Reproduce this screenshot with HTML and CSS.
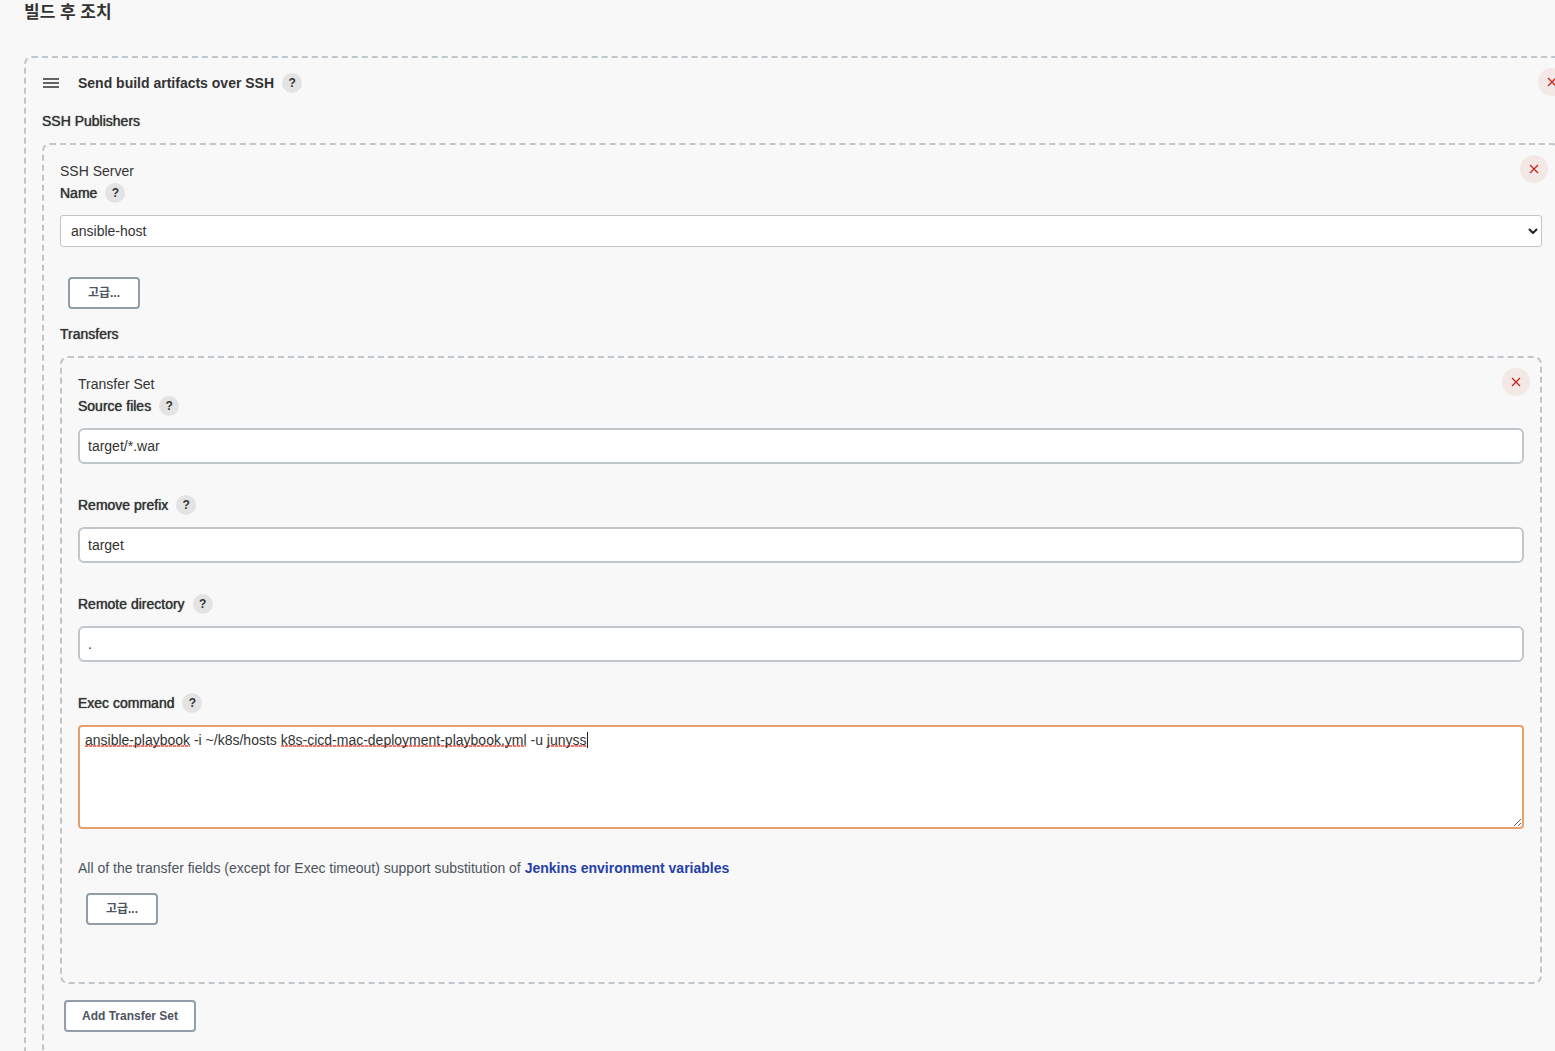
FILE: index.html
```html
<!DOCTYPE html>
<html lang="ko">
<head>
    <meta charset="UTF-8">
    <meta name="viewport" content="width=device-width, initial-scale=1.0">
    <title>빌드 후 조치</title>
    <link rel="stylesheet" href="styles.css">
</head>
<body>
    <main class="config">
        <h1 class="section-title">빌드 후 조치</h1>

        <section class="chunk publisher">
            <button type="button" class="remove" aria-label="Remove publisher">
                <svg viewBox="0 0 10 10"><path d="M1 1l8 8M9 1L1 9"/></svg>
            </button>
            <div class="chunk-header">
                <svg class="drag-handle" viewBox="0 0 16 10"><path d="M0 1h16M0 5h16M0 9h16"/></svg>
                <h2>Send build artifacts over SSH</h2>
                <button type="button" class="help">?</button>
            </div>
            <div class="label-row">SSH Publishers</div>

            <section class="chunk server">
                <button type="button" class="remove" aria-label="Remove server">
                    <svg viewBox="0 0 10 10"><path d="M1 1l8 8M9 1L1 9"/></svg>
                </button>
                <div class="chunk-name">SSH Server</div>
                <div class="field">
                    <div class="label-row">
                        <label for="server-name">Name</label>
                        <button type="button" class="help">?</button>
                    </div>
                    <div class="select-wrap">
                        <select id="server-name">
                            <option selected>ansible-host</option>
                        </select>
                        <svg class="chevron" viewBox="0 0 10 6"><path d="M1 1l4 4 4-4"/></svg>
                    </div>
                </div>
                <button type="button" class="btn btn-advanced">고급...</button>
                <div class="label-row transfers-label">Transfers</div>

                <section class="chunk transfer-set">
                    <button type="button" class="remove" aria-label="Remove transfer set">
                        <svg viewBox="0 0 10 10"><path d="M1 1l8 8M9 1L1 9"/></svg>
                    </button>
                    <div class="chunk-name">Transfer Set</div>
                    <div class="field">
                        <div class="label-row">
                            <label for="source-files">Source files</label>
                            <button type="button" class="help">?</button>
                        </div>
                        <input type="text" id="source-files" value="target/*.war">
                    </div>
                    <div class="field">
                        <div class="label-row">
                            <label for="remove-prefix">Remove prefix</label>
                            <button type="button" class="help">?</button>
                        </div>
                        <input type="text" id="remove-prefix" value="target">
                    </div>
                    <div class="field">
                        <div class="label-row">
                            <label for="remote-directory">Remote directory</label>
                            <button type="button" class="help">?</button>
                        </div>
                        <input type="text" id="remote-directory" value=".">
                    </div>
                    <div class="field">
                        <div class="label-row">
                            <label for="exec-command">Exec command</label>
                            <button type="button" class="help">?</button>
                        </div>
                        <textarea id="exec-command">ansible-playbook -i ~/k8s/hosts k8s-cicd-mac-deployment-playbook.yml -u junyss</textarea>
                    </div>
                    <p class="description">All of the transfer fields (except for Exec timeout) support substitution of <a href="#">Jenkins environment variables</a></p>
                    <button type="button" class="btn btn-advanced">고급...</button>
                </section>

                <button type="button" class="btn btn-add">Add Transfer Set</button>
            </section>
        </section>
    </main>
</body>
</html>
```
FILE: styles.css
```css
* {
    box-sizing: border-box;
}
html {
    scrollbar-width: none;
}
body {
    margin: 0;
    overflow-x: hidden;
    background-color: #f8f8f8;
    color: #333;
    font-family: "Liberation Sans", "Noto Sans CJK KR", sans-serif;
    font-size: 14px;
    line-height: 22px;
}
button, input, select, textarea {
    font-family: inherit;
    color: inherit;
}
/* the form is wider than the pane and runs off to the right */
.config {
    margin: 0 -23px 0 24px;
}
.section-title {
    margin: 0 0 30px;
    font-size: 17px;
    font-weight: 700;
    line-height: 26px;
}
.chunk {
    position: relative;
    padding: 15px 16px;
    border: 2px dashed #bfc6cc;
    border-radius: 8px;
}
.chunk-header {
    display: flex;
    align-items: center;
    height: 20px;
    margin-bottom: 17px;
}
.chunk-header h2 {
    margin: 0 8px 0 19px;
    font-size: 14px;
    font-weight: 700;
}
.drag-handle {
    width: 16px;
    height: 10px;
    margin-left: 1px;
    stroke: #333;
    stroke-width: 1.5;
}
.label-row {
    display: flex;
    align-items: center;
    gap: 8px;
    height: 22px;
    margin-bottom: 11px;
    text-shadow: 0 0 1px #333;
}
.help {
    width: 20px;
    height: 20px;
    padding: 0;
    border: 0;
    border-radius: 50%;
    background-color: #e3e3e3;
    font-size: 12px;
    font-weight: 700;
    line-height: 20px;
    text-align: center;
    text-shadow: none;
}
.remove {
    position: absolute;
    top: 10px;
    right: 10px;
    display: flex;
    align-items: center;
    justify-content: center;
    width: 28px;
    height: 28px;
    padding: 0;
    border: 0;
    border-radius: 50%;
    background-color: #f4e8e7;
}
.remove svg {
    width: 10px;
    height: 10px;
    stroke: #c4281c;
    stroke-width: 1.3;
}
.field {
    margin-bottom: 30px;
}
input[type="text"] {
    display: block;
    width: 100%;
    height: 36px;
    padding: 0 8px;
    border: 2px solid #bfc6cc;
    border-radius: 6px;
    background-color: #fff;
    font-size: 14px;
}
.select-wrap {
    position: relative;
}
select {
    display: block;
    width: 100%;
    height: 32px;
    padding: 0 10px;
    border: 1px solid #bfc6cc;
    border-radius: 3px;
    background-color: #fff;
    font-size: 14px;
    appearance: none;
}
.chevron {
    position: absolute;
    top: 13px;
    right: 4px;
    width: 10px;
    height: 6px;
    fill: none;
    stroke: #222;
    stroke-width: 2;
    pointer-events: none;
}
/* backgrounds: text caret, then the spelling marks under three words */
textarea {
    display: block;
    width: 100%;
    height: 104px;
    padding: 5px;
    border: 2px solid #e6a06c;
    border-radius: 4px;
    background-color: #fff;
    background-image:
        linear-gradient(#222, #222),
        repeating-linear-gradient(90deg, #f0786c 0 3px, #fbd5d1 3px 4px),
        repeating-linear-gradient(90deg, #f0786c 0 3px, #fbd5d1 3px 4px),
        repeating-linear-gradient(90deg, #f0786c 0 3px, #fbd5d1 3px 4px);
    background-position: 507px 5px, 5px 18px, 201px 18px, 467px 18px;
    background-size: 1px 16px, 105px 2px, 245px 2px, 40px 2px;
    background-repeat: no-repeat;
    font-size: 14px;
    line-height: 16px;
    resize: vertical;
}
.description {
    margin: 0 0 16px;
    color: #4d545d;
    line-height: 18px;
}
.description a {
    color: #2440a8;
    font-weight: 700;
    text-decoration: none;
}
.btn {
    display: block;
    height: 32px;
    padding: 0 16px;
    border: 2px solid #929da7;
    border-radius: 4px;
    background-color: #fff;
    color: #4d545d;
    font-size: 12px;
    font-weight: 700;
}
.btn-advanced {
    min-width: 72px;
    margin-left: 8px;
    padding-bottom: 4px;
}
.transfers-label {
    margin-top: 14px;
}
.transfer-set {
    padding-bottom: 57px;
}
.btn-add {
    margin: 16px 0 0 4px;
}
.server {
    padding-bottom: 40px;
}
```
